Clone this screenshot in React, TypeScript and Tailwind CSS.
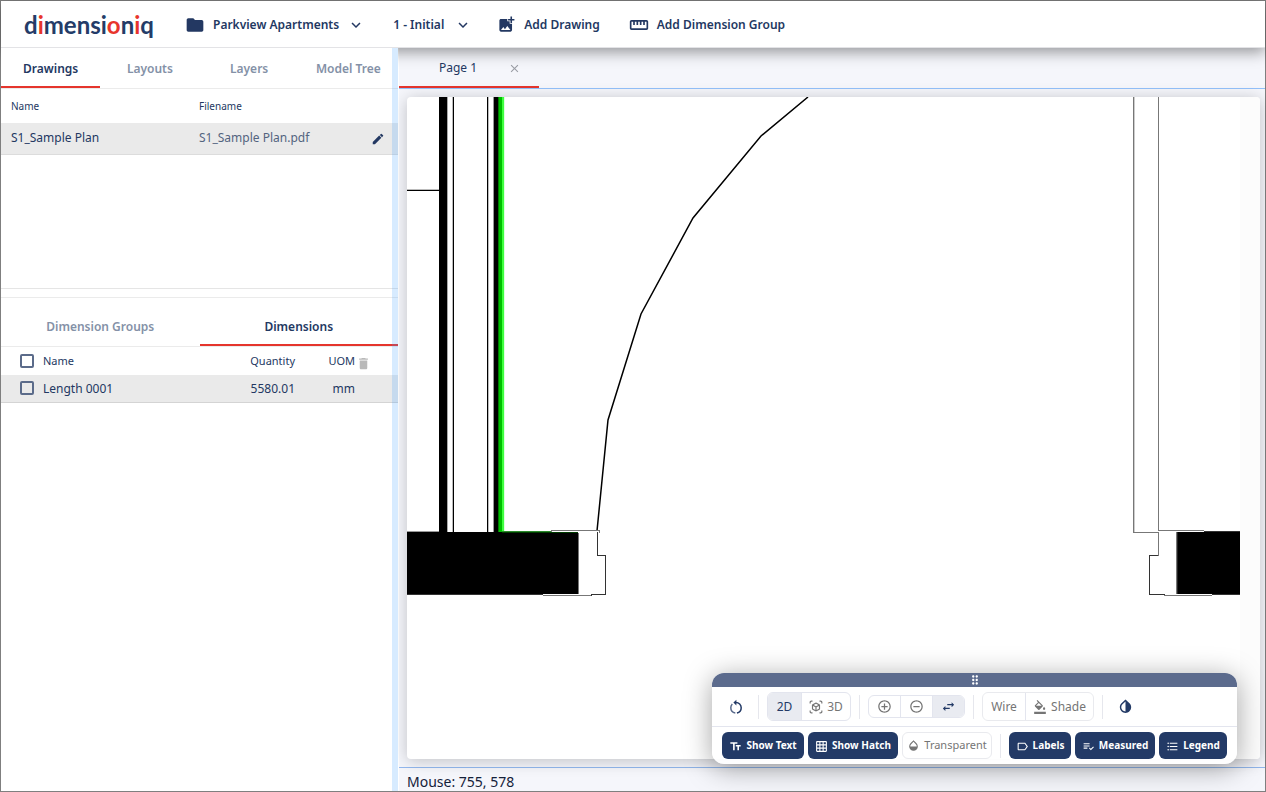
import type { ReactNode } from "react";
import {
  MdAddPhotoAlternate,
  MdClose,
  MdDelete,
  MdDragIndicator,
  MdEdit,
  MdExpandMore,
  MdFolder,
  MdFormatColorFill,
  MdFormatListBulleted,
  MdGridOn,
  MdInvertColors,
  MdOpacity,
  MdOutlineAddCircleOutline,
  MdOutlineLabel,
  MdOutlineRemoveCircleOutline,
  MdOutlineStraighten,
  MdOutlineViewInAr,
  MdPlaylistAddCheck,
  MdSwapHoriz,
  MdTextFields,
} from "react-icons/md";
import clsx from "clsx";

const drawingTabs = ["Drawings", "Layouts", "Layers", "Model Tree"];
const dimensionTabs = ["Dimension Groups", "Dimensions"];

interface TabsProps {
  tabs: string[];
  active: string;
  className: string;
}

const Tabs = ({ tabs, active, className }: TabsProps) => (
  <div role="tablist" className={clsx("grid shrink-0 border-b border-[#ebebeb]", className)}>
    {tabs.map((tab) => (
      <button
        key={tab}
        role="tab"
        aria-selected={tab === active}
        className={clsx(
          "whitespace-nowrap border-b-2 pt-1 font-semibold",
          tab === active ? "border-[#e5352d] text-[#233862]" : "border-transparent text-[#8491a7]"
        )}
      >
        {tab}
      </button>
    ))}
  </div>
);

const Logo = () => (
  <a
    href="#"
    aria-label="dimensioniq"
    className="w-[162px] pl-[23px] font-['Lato',sans-serif] text-2xl font-bold text-[#243c68]"
  >
    d<span className="text-[#e8352c]">i</span>mensi<span className="text-[#e8352c]">o</span>n
    <span className="text-[#e8352c]">i</span>q
  </a>
);

const Header = () => (
  <header className="z-10 flex h-[47px] shrink-0 items-center whitespace-nowrap border-b border-[#e3e3e6] bg-white pt-px font-semibold shadow-[0_4px_14px_rgba(0,0,0,0.4)]">
    <Logo />
    <button className="ml-[22px] flex items-center">
      <MdFolder size={20} className="mr-2" />
      Parkview Apartments
      <MdExpandMore size={18} className="ml-2" />
    </button>
    <button className="ml-7 flex items-center">
      1 - Initial
      <MdExpandMore size={18} className="ml-2.5" />
    </button>
    <button className="ml-[25px] flex items-center">
      <MdAddPhotoAlternate size={19} className="mr-2" />
      Add Drawing
    </button>
    <button className="ml-[29px] flex items-center">
      <MdOutlineStraighten size={20} className="mr-2" />
      Add Dimension Group
    </button>
  </header>
);

const Checkbox = ({ label }: { label: string }) => (
  <input
    type="checkbox"
    aria-label={label}
    className="block size-3.5 appearance-none rounded-[2px] border-2 border-[#5b6b8a] checked:bg-[#5b6b8a]"
  />
);

const Sidebar = () => (
  <aside className="relative z-20 mr-px flex w-[397px] shrink-0 flex-col bg-white">
    <Tabs tabs={drawingTabs} active="Drawings" className="h-[41px] grid-cols-4" />
    <div className="h-[200px] shrink-0 border-b border-[#e5e5e5]">
      <table className="w-full table-fixed text-left">
        <thead>
          <tr className="h-[34px] text-[10px]">
            <th className="w-[188px] pt-0.5 pl-2.5 font-normal">Name</th>
            <th className="pt-0.5 pl-2.5 font-normal">Filename</th>
            <th className="w-[39px]" aria-label="Actions" />
          </tr>
        </thead>
        <tbody>
          <tr className="h-[31px] border-b border-[#dcdcdc] bg-[#eaeaea]">
            <td className="pl-2.5">S1_Sample Plan</td>
            <td className="pl-2.5 text-[#53647f]">S1_Sample Plan.pdf</td>
            <td className="pt-px pl-3">
              <button aria-label="Edit drawing" className="block">
                <MdEdit size={14} />
              </button>
            </td>
          </tr>
        </tbody>
      </table>
    </div>
    <div className="mt-2 flex-1 border-t border-[#ebebeb]">
      <Tabs tabs={dimensionTabs} active="Dimensions" className="h-[49px] grid-cols-2 pt-2" />
      <table className="w-full table-fixed">
        <thead>
          <tr className="h-7 text-[11px]">
            <th className="w-[42px] pl-[19px]">
              <Checkbox label="Select all dimensions" />
            </th>
            <th className="text-left font-normal">Name</th>
            <th className="w-20 text-right font-normal">Quantity</th>
            <th className="w-[60px] text-right font-normal">UOM</th>
            <th className="w-[43px] pt-1 pl-px">
              <button aria-label="Delete selected" className="block text-[#b9b9b9]">
                <MdDelete size={15} />
              </button>
            </th>
          </tr>
        </thead>
        <tbody>
          <tr className="h-[27px] border-b border-[#d4d4d4] bg-[#eaeaea]">
            <td className="pl-[19px]">
              <Checkbox label="Select Length 0001" />
            </td>
            <td className="pt-0.5">Length 0001</td>
            <td className="pt-0.5 text-right">5580.01</td>
            <td className="pt-0.5 text-right">mm</td>
            <td />
          </tr>
        </tbody>
      </table>
    </div>
    {/* Resize handle */}
    <div className="absolute inset-y-0 right-0 w-1.5 cursor-col-resize bg-[#379bff]/20" />
  </aside>
);

const FloorPlan = () => (
  <svg className="absolute inset-0 size-full" shapeRendering="crispEdges" aria-label="Floor plan">
    <rect x="833" width="100%" height="100%" fill="#fcfcfc" />

    {/* Left wall */}
    <rect x="0" y="92" width="32" height="1" fill="#bbb" />
    <rect x="0" y="93" width="32" height="1" />
    <rect x="32" width="8" height="436" />
    <rect x="40" width="1" height="435" fill="#aaa" />
    <rect x="45" width="1" height="435" fill="#bbb" />
    <rect x="46" width="1" height="435" />
    <rect x="80" width="1" height="435" />
    <rect x="81" width="1" height="435" fill="#bbb" />
    <rect x="86" width="1" height="435" fill="#999" />
    <rect x="87" width="4" height="435" />
    <rect x="0" y="434" width="32" height="1" fill="#999" />
    <rect x="0" y="435" width="171" height="62" />
    <rect x="0" y="497" width="136" height="1" fill="#333" />
    <rect x="171" y="436" width="1" height="61" fill="#777" />

    {/* Measured length */}
    <rect x="91" width="1" height="435" fill="#007a00" />
    <rect x="92" width="3" height="435" fill="#00bf00" />
    <rect x="95" width="2" height="435" fill="#3fff3f" />
    <rect x="97" width="1" height="434" fill="#dfffdf" />
    <rect x="95" y="434" width="50" height="1" fill="#2c8a2c" />
    <rect x="95" y="435" width="76" height="1" fill="#003c00" />

    {/* Door swing */}
    <polyline
      points="401,0 354,39 286,121 234,217 201,323 190,434"
      fill="none"
      stroke="#000"
      strokeWidth="1.5"
      shapeRendering="auto"
    />

    {/* Left jamb */}
    <g fill="none" stroke="#333">
      <path d="M144 434.5V433.5H192V435.5" stroke="#777" />
      <path d="M190.5 435V458.5H198.5V497.5H184V498.5" />
      <path d="M184 498.5H136" stroke="#777" />
    </g>

    {/* Right jamb */}
    <g fill="none" stroke="#777">
      <path d="M726.5 0V435.5H751V458.5" />
      <path d="M727.5 0V435" stroke="#ccc" />
      <path d="M751.5 0V433.5H797" />
      <path d="M751 458.5H742.5V497.5H757V498.5" stroke="#333" />
      <path d="M757 498.5H805" />
    </g>
    <rect x="770" y="435" width="63" height="62" />
    <rect x="769" y="435" width="1" height="62" fill="#777" />
    <rect x="770" y="435" width="1" height="62" fill="#222" />
    <rect x="797" y="434" width="36" height="1" fill="#333" />
    <rect x="805" y="497" width="28" height="1" fill="#333" />
  </svg>
);

const RotateIcon = () => (
  <svg width="16" height="16" viewBox="0 0 16 16" fill="none" stroke="currentColor" strokeWidth="1.5">
    <path d="M7.5 3.6C11 3.4 13.2 5.900 13.200 8.700C13.200 11.300 11.400 13.500 8.900 13.900" />
    <path d="M7.300 13.900C4.600 13.500 2.800 11.300 2.800 8.700C2.800 7.200 3.400 5.900 4.300 5" strokeOpacity="0.75" />
    <path d="M8.400 0.800V6.400L5.400 3.600Z" fill="currentColor" stroke="none" />
  </svg>
);

const Divider = () => <div className="mx-2 h-6 w-px bg-[#e6e7ed]" />;

interface GroupButtonProps {
  label?: string;
  active?: boolean;
  className: string;
  children: ReactNode;
}

const GroupButton = ({ label, active, className, children }: GroupButtonProps) => (
  <button
    aria-label={label}
    aria-pressed={active}
    className={clsx(
      "flex items-center justify-center gap-1 border-[#e3e5ee] not-first:border-l",
      active && "bg-[#e9ebf1] text-[#233a66]",
      className
    )}
  >
    {children}
  </button>
);

interface ToolButtonProps {
  icon: ReactNode;
  className: string;
  children: ReactNode;
}

const ToolButton = ({ icon, className, children }: ToolButtonProps) => (
  <button
    className={clsx(
      "flex h-[27px] items-center justify-center gap-1 whitespace-nowrap rounded-md bg-[#233a66] pt-px text-[10px] font-bold text-white",
      className
    )}
  >
    {icon}
    {children}
  </button>
);

const Toolbar = () => (
  <div className="absolute right-7 bottom-[27px] z-30 w-[525px] overflow-hidden rounded-xl bg-white/95 text-[#757575] shadow-[0_4px_28px_rgba(0,0,0,0.36)]">
    <div className="flex h-3.5 cursor-move items-center justify-center bg-[#5c6b8d] text-white">
      <MdDragIndicator size={14} />
    </div>
    <div className="flex h-10 items-center border-b border-[#e3e5ee] px-2.5">
      <button aria-label="Rotate" className="flex w-7 justify-center text-[#233a66]">
        <RotateIcon />
      </button>
      <Divider />
      <div className="flex h-[29px] overflow-hidden rounded-md border border-[#e3e5ee]">
        <GroupButton active className="w-[33px]">2D</GroupButton>
        <GroupButton className="w-[49px]">
          <MdOutlineViewInAr size={14} />
          3D
        </GroupButton>
      </div>
      <Divider />
      <div className="flex h-[23px] overflow-hidden rounded-md border border-[#e3e5ee]">
        <GroupButton label="Zoom in" className="w-[31px]">
          <MdOutlineAddCircleOutline size={15} />
        </GroupButton>
        <GroupButton label="Zoom out" className="w-8">
          <MdOutlineRemoveCircleOutline size={15} />
        </GroupButton>
        <GroupButton label="Swap direction" active className="w-8">
          <MdSwapHoriz size={15} />
        </GroupButton>
      </div>
      <Divider />
      <div className="flex h-[29px] overflow-hidden rounded-md border border-[#e9eaee]">
        <GroupButton className="w-[42px]">Wire</GroupButton>
        <GroupButton className="w-[68px]">
          <MdFormatColorFill size={14} />
          Shade
        </GroupButton>
      </div>
      <Divider />
      <button aria-label="Invert colors" className="flex w-7 justify-center text-[#233a66]">
        <MdInvertColors size={17} />
      </button>
    </div>
    <div className="flex h-[37px] items-center px-2.5">
      <div className="flex gap-1">
        <ToolButton icon={<MdTextFields size={13} />} className="w-[82px]">Show Text</ToolButton>
        <ToolButton icon={<MdGridOn size={13} />} className="w-[90px]">Show Hatch</ToolButton>
        <button className="flex h-[27px] w-[90px] items-center justify-center gap-1 rounded-md border border-[#e9eaee] text-[11px]">
          <MdOpacity size={13} />
          Transparent
        </button>
      </div>
      <Divider />
      <div className="flex gap-1">
        <ToolButton icon={<MdOutlineLabel size={13} />} className="w-[62px]">Labels</ToolButton>
        <ToolButton icon={<MdPlaylistAddCheck size={13} />} className="w-20">Measured</ToolButton>
        <ToolButton icon={<MdFormatListBulleted size={13} />} className="w-[68px]">Legend</ToolButton>
      </div>
    </div>
  </div>
);

const Workspace = () => (
  <main className="flex min-w-0 flex-1 flex-col bg-[#f5f6fb]">
    <div role="tablist" className="flex h-[41px] shrink-0 border-b border-[#93c1fb]">
      <div className="flex w-[140px] items-center border-b-2 border-[#e5352d] pt-0.5 pl-10">
        <button role="tab" aria-selected="true">Page 1</button>
        <button aria-label="Close Page 1" className="ml-[31px] text-[#9a9da5]">
          <MdClose size={13} />
        </button>
      </div>
    </div>
    <div className="flex flex-1 flex-col border-b border-[#93b8ee] pt-2 pr-[5px] pb-2 pl-2">
      <div className="relative flex-1 overflow-hidden rounded bg-white shadow-[0_2px_16px_rgba(0,0,0,0.22)]">
        <FloorPlan />
      </div>
    </div>
    <p className="h-[23px] shrink-0 overflow-hidden pt-1 pl-2 text-sm text-[#14213a]">Mouse: 755, 578</p>
  </main>
);

export default function App() {
  return (
    <div className="relative flex min-h-screen flex-col border border-[#7f7f7f] bg-white font-['Noto_Sans',sans-serif] text-xs text-[#233862]">
      <Header />
      <div className="flex flex-1">
        <Sidebar />
        <Workspace />
      </div>
      <Toolbar />
    </div>
  );
}
